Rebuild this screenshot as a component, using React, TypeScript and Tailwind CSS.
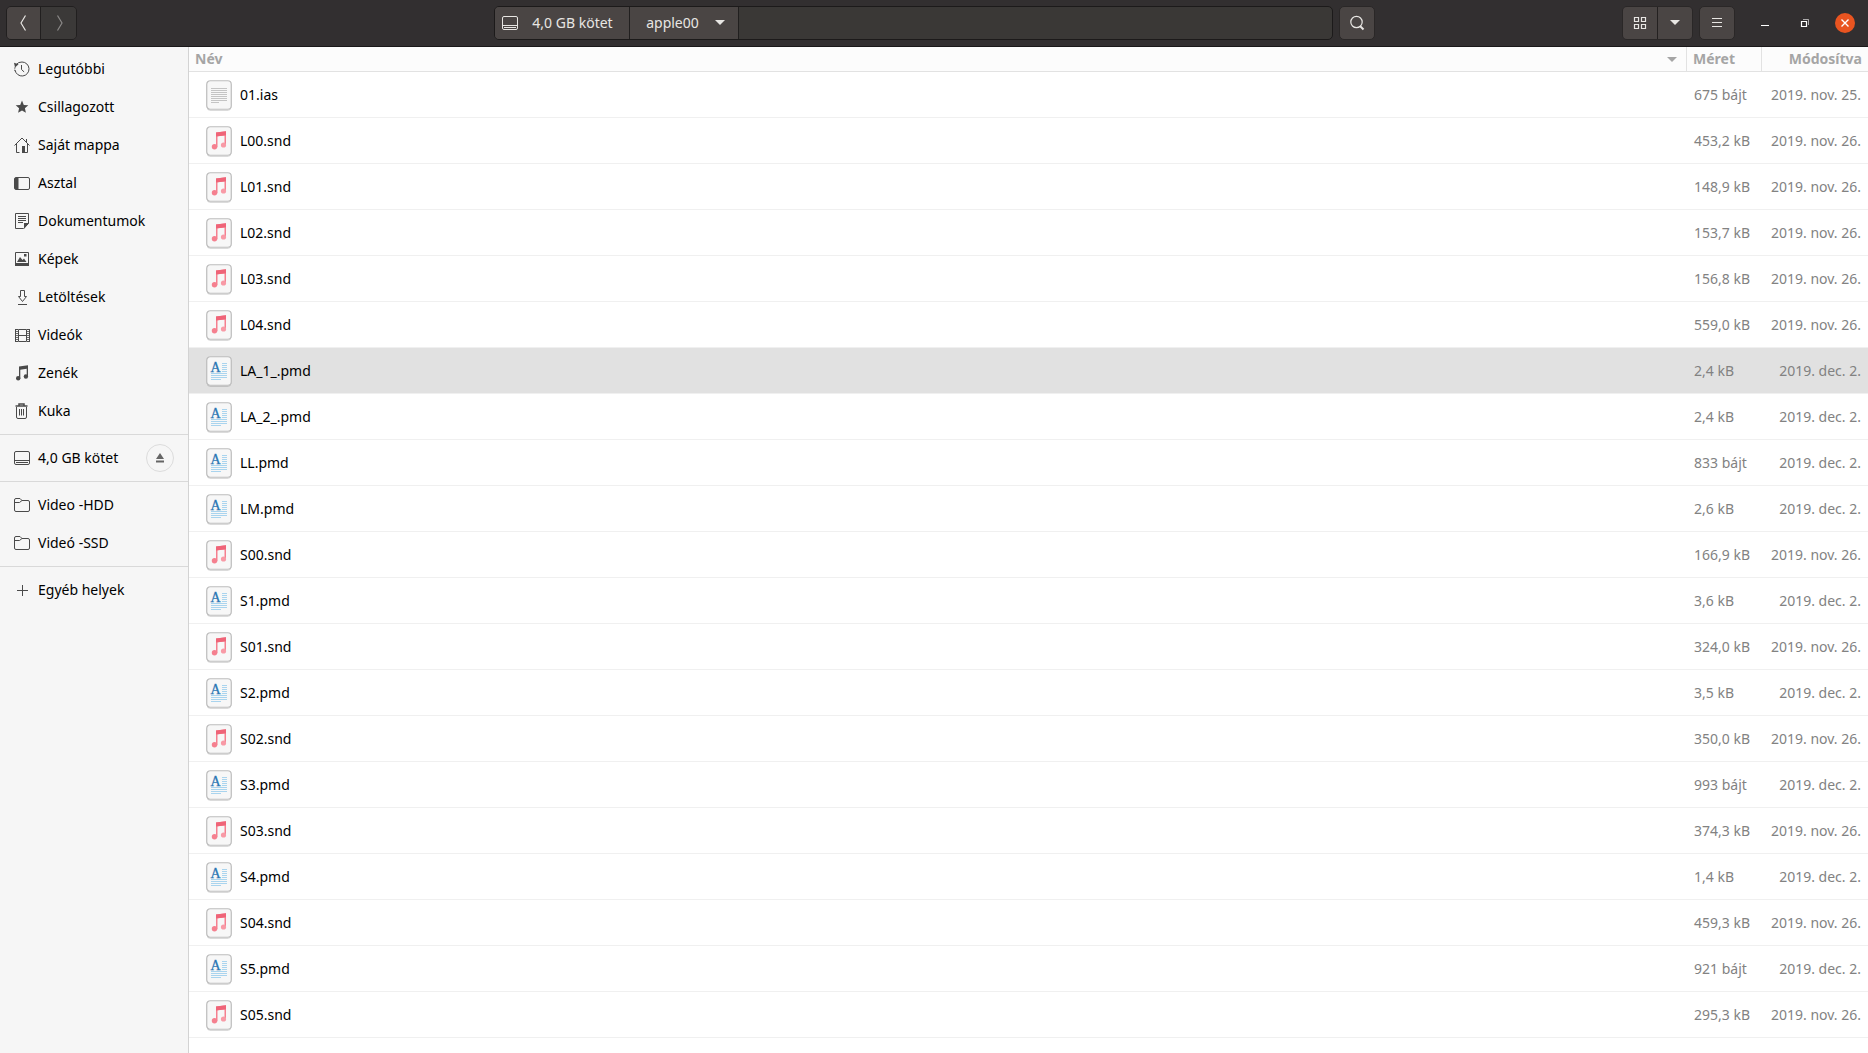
import type { ReactNode } from "react";

type Kind = "text" | "sound" | "doc";
type FileRow = { name: string; kind: Kind; size: string; date: string };

const NOV26 = "2019. nov. 26.";
const DEC2 = "2019. dec. 2.";

const files: FileRow[] = [
  { name: "01.ias", kind: "text", size: "675 bájt", date: "2019. nov. 25." },
  { name: "L00.snd", kind: "sound", size: "453,2 kB", date: NOV26 },
  { name: "L01.snd", kind: "sound", size: "148,9 kB", date: NOV26 },
  { name: "L02.snd", kind: "sound", size: "153,7 kB", date: NOV26 },
  { name: "L03.snd", kind: "sound", size: "156,8 kB", date: NOV26 },
  { name: "L04.snd", kind: "sound", size: "559,0 kB", date: NOV26 },
  { name: "LA_1_.pmd", kind: "doc", size: "2,4 kB", date: DEC2 },
  { name: "LA_2_.pmd", kind: "doc", size: "2,4 kB", date: DEC2 },
  { name: "LL.pmd", kind: "doc", size: "833 bájt", date: DEC2 },
  { name: "LM.pmd", kind: "doc", size: "2,6 kB", date: DEC2 },
  { name: "S00.snd", kind: "sound", size: "166,9 kB", date: NOV26 },
  { name: "S1.pmd", kind: "doc", size: "3,6 kB", date: DEC2 },
  { name: "S01.snd", kind: "sound", size: "324,0 kB", date: NOV26 },
  { name: "S2.pmd", kind: "doc", size: "3,5 kB", date: DEC2 },
  { name: "S02.snd", kind: "sound", size: "350,0 kB", date: NOV26 },
  { name: "S3.pmd", kind: "doc", size: "993 bájt", date: DEC2 },
  { name: "S03.snd", kind: "sound", size: "374,3 kB", date: NOV26 },
  { name: "S4.pmd", kind: "doc", size: "1,4 kB", date: DEC2 },
  { name: "S04.snd", kind: "sound", size: "459,3 kB", date: NOV26 },
  { name: "S5.pmd", kind: "doc", size: "921 bájt", date: DEC2 },
  { name: "S05.snd", kind: "sound", size: "295,3 kB", date: NOV26 },
];

const selectedName = "LA_1_.pmd";

function Icon({ children }: { children: ReactNode }) {
  return (
    <svg width="16" height="16" viewBox="0 0 16 16" fill="none" stroke="currentColor" className="shrink-0" aria-hidden="true">
      {children}
    </svg>
  );
}

const Recent = () => (
  <Icon>
    <path d="M2.2 3.6A7 7 0 0 1 8 1a7 7 0 1 1-6.9 8.2" />
    <path d="M1 10.2a7 7 0 0 1 .3-4.6" strokeDasharray="1.5 1" />
    <path d="M0 1.8 4.6 3.2 1 6.4Z" fill="currentColor" stroke="none" />
    <path d="M7.5 4v4.5l2.6 2.4" />
  </Icon>
);
const Star = () => (
  <Icon>
    <path d="m8 1.6 1.8 4.3 4.5.4-3.4 3 1 4.5L8 11.4l-3.900 2.400 1-4.500-3.400-3 4.500-.4Z" fill="currentColor" stroke="none" />
  </Icon>
);
const Home = () => (
  <Icon>
    <path d="M.5 8.500 8 1l7.500 7.500M2.500 7v8.500h3M13.500 7v8.500h-3M12.500 2v3.500" />
    <path d="M8 9h3v7H8z" fill="currentColor" stroke="none" />
  </Icon>
);
const Desktop = () => (
  <Icon>
    <rect x=".5" y="2.500" width="15" height="12" rx="1.500" />
    <path d="M1 3h3.500v11H1z" fill="currentColor" stroke="none" />
  </Icon>
);
const Documents = () => (
  <Icon>
    <path d="M1.500.500h13v10l-5 5h-8z" />
    <path d="M15 10h-5v6z" fill="currentColor" stroke="none" />
    <path d="M4 3.500h8M4 5.500h8M4 7.500h8M4 9.500h5" />
  </Icon>
);
const Pictures = () => (
  <Icon>
    <path d="M1.500 1.500h13v13h-13z" />
    <path d="M1 12h14v3H1zM3 11l3-5 2.500 3L10 7.500l2.500 3.500zM10 3h2.500v2.500H10z" fill="currentColor" stroke="none" />
  </Icon>
);
const Downloads = () => (
  <Icon>
    <path d="M6.500 1.500h4v6h2l-4 5-4-5h2zM4 15.500h9" />
  </Icon>
);
const Videos = () => (
  <Icon>
    <path d="M4.500 2.500h8v12h-8zM4 8.500h9M1 2.500h3M13 2.500h3M1 14.500h3M13 14.500h3" />
    <path d="M1.500 2v13M15.500 2v13" />
    <path d="M2 4.500h2M2 6.500h2M2 8.500h2M2 10.500h2M2 12.500h2M13 4.500h2M13 6.500h2M13 8.500h2M13 10.500h2M13 12.500h2" strokeWidth=".8" />
  </Icon>
);
const Music = () => (
  <Icon>
    <path d="M5 1.500 14 .3v11.200h-1.300V3.800L6.300 4.700v8.500H5z" fill="currentColor" stroke="none" />
    <circle cx="4.200" cy="13.300" r="2.200" fill="currentColor" stroke="none" />
    <circle cx="11.900" cy="11.500" r="2.200" fill="currentColor" stroke="none" />
  </Icon>
);
const Trash = () => (
  <Icon>
    <path d="M1.500 3h12M5 2.500V1h5v1.500" strokeWidth="1.500" />
    <path d="M2.500 4v10q0 1.500 1.500 1.500h7q1.500 0 1.500-1.500V4M5.500 6v6.500M7.500 6v6.500M9.500 6v6.500" />
  </Icon>
);
const Drive = () => (
  <Icon>
    <rect x=".5" y="1.500" width="15" height="13" rx="1.500" />
    <path d="M1 10.500h14M2 12.500h12" />
  </Icon>
);
const Folder = () => (
  <Icon>
    <path d="M.5 5V3Q.5 1.500 2 1.500h4l2 2h6q1.500 0 1.500 1.500v8q0 1.500-1.500 1.500H2Q.5 14.500.5 13zM.5 5.500h5l2.500-2" />
  </Icon>
);
const Plus = () => (
  <Icon>
    <path d="M8.500 3v11M3 8.500h11" />
  </Icon>
);

const places: [string, () => ReactNode][] = [
  ["Legutóbbi", Recent],
  ["Csillagozott", Star],
  ["Saját mappa", Home],
  ["Asztal", Desktop],
  ["Dokumentumok", Documents],
  ["Képek", Pictures],
  ["Letöltések", Downloads],
  ["Videók", Videos],
  ["Zenék", Music],
  ["Kuka", Trash],
];

function Place({ label, Glyph, children }: { label: string; Glyph: () => ReactNode; children?: ReactNode }) {
  return (
    <li className="flex h-[38px] items-center pr-3.5">
      <a href="#" className="flex h-full flex-1 items-center gap-2 pl-3.5 whitespace-nowrap text-black">
        <span className="text-[#4a4a4a]">
          <Glyph />
        </span>
        {label}
      </a>
      {children}
    </li>
  );
}

function FileIcon({ kind }: { kind: Kind }) {
  return (
    <svg width="26" height="33" viewBox="0 -2 26 33" className="shrink-0" aria-hidden="true">
      <rect x="1" y="1.500" width="24" height="29" rx="3.500" fill="none" stroke="#000" strokeOpacity=".14" />
      <rect x=".75" y=".75" width="24.500" height="28.500" rx="3.500" fill="#f7f7f7" stroke="#bdbdbd" strokeWidth="1.200" />
      {kind === "text" && (
        <path d="M5 8.500h16M5 10.500h16M5 12.500h16M5 14.500h16M5 16.500h16M5 18.500h16M5 20.500h16M5 22.500h8" stroke="#c4c4c4" />
      )}
      {kind === "sound" && (
        <>
          <path d="M10 6.500 20 5.300v13h-1.500V9.400l-7 .9v11H10z" fill="#f5808f" />
          <path d="M10 6.500 20 5.300v3.900l-10 1.300z" fill="#ef6478" />
          <circle cx="8.500" cy="20.700" r="2.700" fill="#f5808f" />
          <circle cx="17.500" cy="19" r="2.600" fill="#f89aa6" />
        </>
      )}
      {kind === "doc" && (
        <>
          <text x="4.500" y="16" fontFamily="Liberation Serif, serif" fontSize="14" fill="#2a76b4" stroke="#2a76b4" strokeWidth=".3">
            A
          </text>
          <path
            d="M16 7.500h5M16 9.500h5M16 11.500h5M16 13.500h5M16 15.500h5M5 17.500h16M5 19.500h16M5 21.500h16M5 23.500h10"
            stroke="#a9d4ee"
          />
        </>
      )}
    </svg>
  );
}

function Caret() {
  return (
    <svg width="10" height="5" viewBox="0 0 10 5" fill="currentColor" aria-hidden="true">
      <path d="M0 0h10L5 5z" />
    </svg>
  );
}

const raised = "flex items-center justify-center bg-[#4a4544] text-[#e8e6e3]";

export default function App() {
  return (
    <div className="flex min-h-screen flex-col bg-white font-['Noto_Sans',sans-serif] text-[14px] leading-5 text-black">
      <header className="grid h-[47px] grid-cols-[1fr_minmax(0,881px)_1fr] items-center border-b border-[#1a1819] bg-[#322f30] pb-px">
        <div className="flex pl-1.5">
          <div className="flex h-[34px] overflow-hidden rounded-[5px] border border-[#211f1f]">
            <button type="button" aria-label="Vissza" className={`${raised} w-[34px] border-r border-[#211f1f]`}>
              <svg width="16" height="16" viewBox="0 0 16 16" fill="none" stroke="currentColor" strokeWidth="1.200">
                <path d="M9.500.5 5 8l4.500 7.500" />
              </svg>
            </button>
            <button type="button" aria-label="Előre" disabled className="flex w-[35px] items-center justify-center bg-[#3b3938] text-[#8b8988]">
              <svg width="16" height="16" viewBox="0 0 16 16" fill="none" stroke="currentColor" strokeWidth="1.200">
                <path d="M6.500.5 11 8l-4.500 7.500" />
              </svg>
            </button>
          </div>
        </div>
        <div className="flex gap-1.5">
          <nav aria-label="Útvonal" className="flex h-[34px] flex-1 overflow-hidden rounded-[5px] border border-[#1c1a1a] bg-[#3a3836]">
            <button type="button" className={`${raised} w-[135px] gap-3.5 border-r border-[#211f1f] pr-2 whitespace-nowrap`}>
              <Drive />
              4,0 GB kötet
            </button>
            <button type="button" className={`${raised} w-[109px] gap-4 border-r border-[#211f1f] pl-1`}>
              apple00
              <Caret />
            </button>
          </nav>
          <button type="button" aria-label="Keresés" className={`${raised} h-[34px] w-9 rounded-[5px] border border-[#2a2727]`}>
            <svg width="16" height="16" viewBox="0 0 16 16" fill="none" stroke="currentColor">
              <circle cx="7.500" cy="7" r="5.700" strokeWidth="1.200" />
              <path d="m11 11 3.500 3.500" strokeWidth="2" />
            </svg>
          </button>
        </div>
        <div className="flex items-center justify-end pr-[13px]">
          <div className="mr-1.5 flex h-[34px] overflow-hidden rounded-[5px] border border-[#2a2727]">
            <button type="button" aria-label="Rácsnézet" className={`${raised} w-[35px] border-r border-[#242121]`}>
              <svg width="16" height="16" viewBox="0 0 16 16" fill="none" stroke="currentColor" strokeWidth="1.200">
                <path d="M2.500 2.500h4v4h-4zM9.500 2.500h4v4h-4zM2.500 9.500h4v4h-4zM9.500 9.500h4v4h-4z" />
              </svg>
            </button>
            <button type="button" aria-label="Nézet beállításai" className={`${raised} w-[34px]`}>
              <Caret />
            </button>
          </div>
          <button type="button" aria-label="Menü" className={`${raised} mr-5 h-[34px] w-9 rounded-[5px] border border-[#2a2727]`}>
            <svg width="16" height="16" viewBox="0 0 16 16" fill="none" stroke="currentColor">
              <path d="M3 3.500h10M3 7.500h10M3 11.500h10" strokeWidth="1.200" />
            </svg>
          </button>
          <button type="button" aria-label="Kis méret" className="mr-5 flex size-5 items-center justify-center text-white">
            <svg width="16" height="16" viewBox="0 0 16 16" fill="none" stroke="currentColor">
              <path d="M4 10.500h8" />
            </svg>
          </button>
          <button type="button" aria-label="Visszaállítás" className="mr-5 flex size-5 items-center justify-center text-white">
            <svg width="16" height="16" viewBox="0 0 16 16" fill="none" stroke="currentColor">
              <path d="M4.500 6.500h5v5h-5z" strokeWidth="1.200" />
              <path d="M6 4.500h5.500V10" strokeOpacity=".6" />
            </svg>
          </button>
          <button type="button" aria-label="Bezárás" className="flex size-5 items-center justify-center rounded-full bg-[#e95420] text-white">
            <svg width="16" height="16" viewBox="0 0 16 16" fill="none" stroke="currentColor" strokeWidth="1.400">
              <path d="m4.500 4.500 7 7m0-7-7 7" />
            </svg>
          </button>
        </div>
      </header>

      <div className="flex flex-1">
        <nav aria-label="Helyek" className="w-[189px] shrink-0 border-r border-[#d3d3d3] bg-[#f6f6f6] pt-[3px]">
          <ul className="border-b border-[#d9d9d9] pb-1">
            {places.map(([label, Glyph]) => (
              <Place key={label} label={label} Glyph={Glyph} />
            ))}
          </ul>
          <ul className="border-b border-[#d9d9d9] py-1">
            <Place label="4,0 GB kötet" Glyph={Drive}>
              <button
                type="button"
                aria-label="Kiadás"
                className="flex size-7 shrink-0 items-center justify-center rounded-full border border-[#dcdcdc] text-[#666]"
              >
                <svg width="10" height="10" viewBox="0 0 10 10" fill="currentColor">
                  <path d="m5 0 4 6H1zM1 7.500h8v2H1z" />
                </svg>
              </button>
            </Place>
          </ul>
          <ul className="border-b border-[#d9d9d9] py-1">
            <Place label="Video -HDD" Glyph={Folder} />
            <Place label="Videó -SSD" Glyph={Folder} />
          </ul>
          <ul className="py-1">
            <Place label="Egyéb helyek" Glyph={Plus} />
          </ul>
        </nav>

        <main className="min-w-0 flex-1">
          <table className="w-full table-fixed border-separate border-spacing-0">
            <colgroup>
              <col />
              <col className="w-[75px]" />
              <col className="w-[106px]" />
            </colgroup>
            <thead className="bg-[#fcfcfc] text-[#a5a5a5]">
              <tr className="h-[25px]">
                <th scope="col" className="border-r border-b border-[#e2e2e2] p-0 text-left font-bold">
                  <button type="button" className="flex w-full items-center justify-between pr-[9px] pl-1.5">
                    Név
                    <Caret />
                  </button>
                </th>
                <th scope="col" className="border-r border-b border-[#e2e2e2] p-0 pl-1.5 text-left font-bold">
                  Méret
                </th>
                <th scope="col" className="border-b border-[#e2e2e2] p-0 pr-1.5 text-right font-bold">
                  Módosítva
                </th>
              </tr>
            </thead>
            <tbody className="whitespace-nowrap">
              {files.map((f) => (
                <tr key={f.name} aria-selected={f.name === selectedName} className="h-[46px] aria-selected:bg-[#e1e1e1]">
                  <td className="border-b border-[#f0f0f0] p-0 pl-[17px]">
                    <div className="flex items-center gap-2">
                      <FileIcon kind={f.kind} />
                      {f.name}
                    </div>
                  </td>
                  <td className="border-b border-[#f0f0f0] p-0 pl-[7px] text-[#828282]">{f.size}</td>
                  <td className="border-b border-[#f0f0f0] p-0 pr-[7px] text-right text-[#828282]">{f.date}</td>
                </tr>
              ))}
            </tbody>
          </table>
        </main>
      </div>
    </div>
  );
}
